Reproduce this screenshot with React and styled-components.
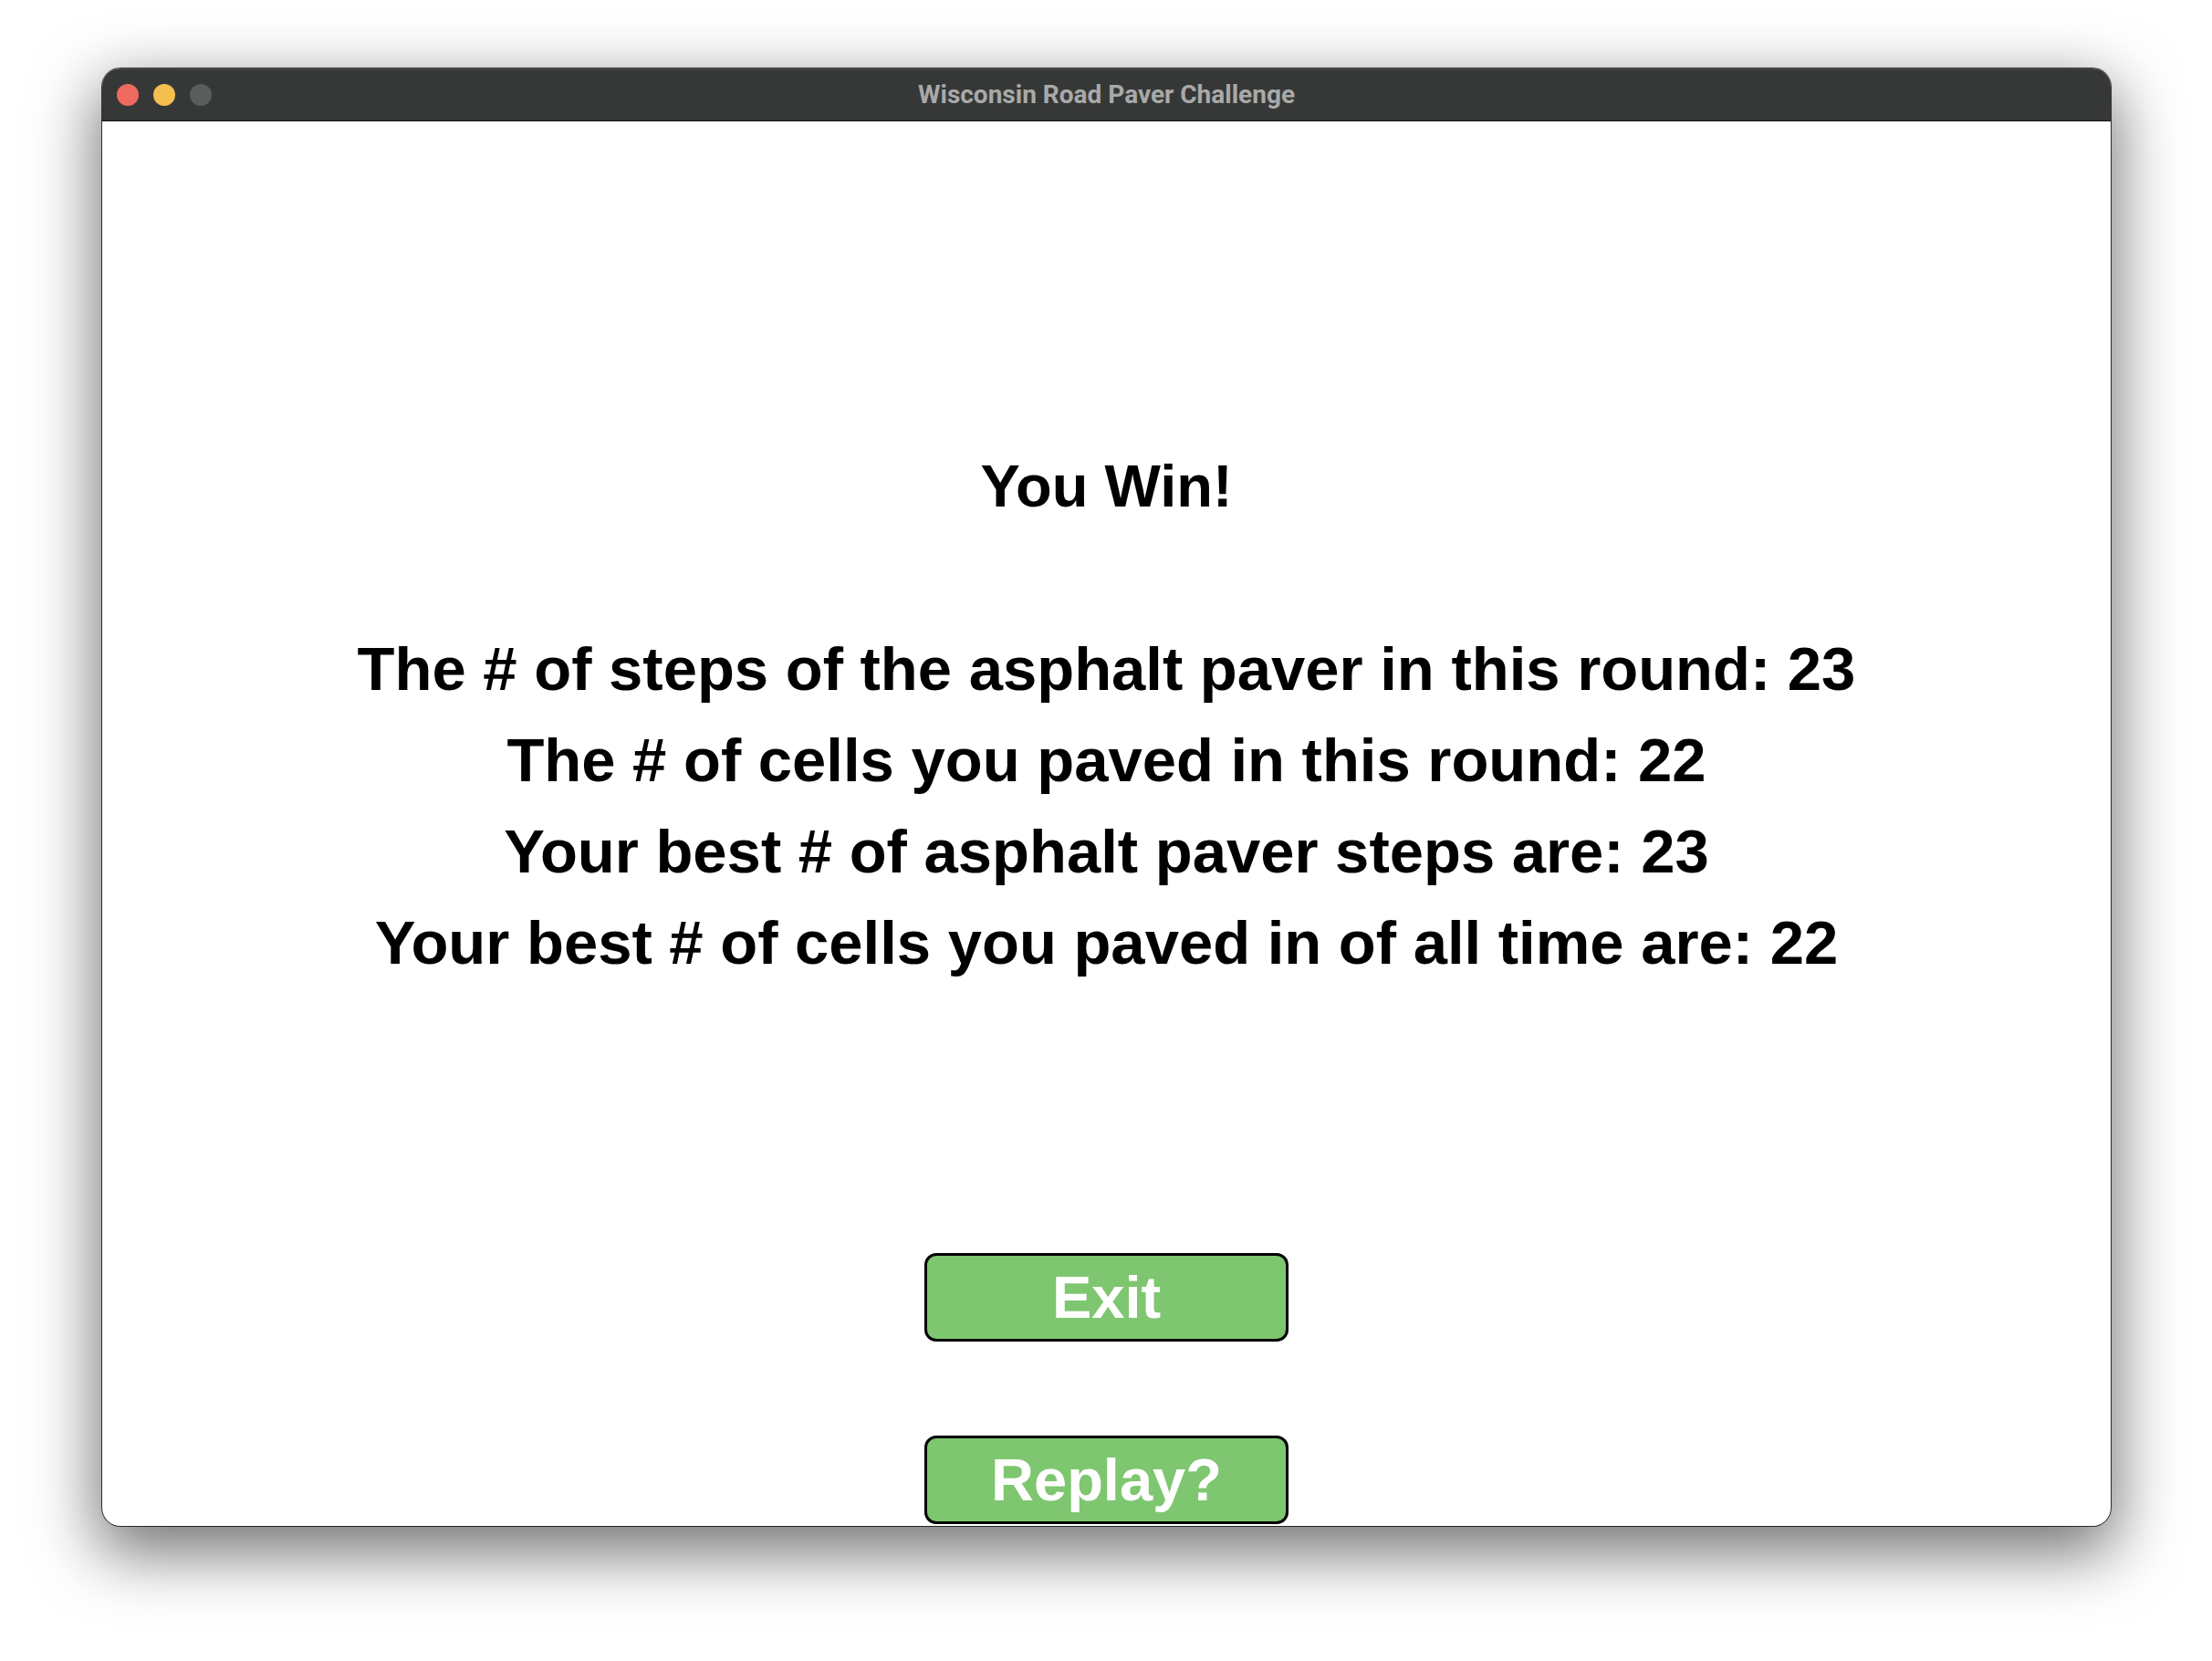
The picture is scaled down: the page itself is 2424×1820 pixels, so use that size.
import React from "react";
import styled, { createGlobalStyle } from "styled-components";

const GlobalStyle = createGlobalStyle`
  html, body {
    margin: 0;
    padding: 0;
    background: #ffffff;
  }
  body {
    font-family: "Liberation Sans", Arial, sans-serif;
  }
`;

const stats = [
    "The # of steps of the asphalt paver in this round: 23",
    "The # of cells you paved in this round: 22",
    "Your best # of asphalt paver steps are: 23",
    "Your best # of cells you paved in of all time are: 22",
];

const App = () => {
    return (
        <>
            <GlobalStyle />
            <Desktop>
                <Window>
                    <TitleBar>
                        <Lights>
                            <Light color="#ee6a5f" />
                            <Light color="#f5bf4f" />
                            <Light color="#5a5d5c" />
                        </Lights>
                        <Title>Wisconsin Road Paver Challenge</Title>
                        <span />
                    </TitleBar>
                    <Content>
                        <Heading>You Win!</Heading>
                        <Stats>
                            {stats.map((line) => (
                                <StatLine key={line}>{line}</StatLine>
                            ))}
                        </Stats>
                        <Buttons>
                            <GameButton>Exit</GameButton>
                            <GameButton>Replay?</GameButton>
                        </Buttons>
                    </Content>
                </Window>
            </Desktop>
        </>
    );
};

export default App;

const Desktop = styled.div`
    width: 2424px;
    height: 1820px;
    padding: 75px 111px 0 112px;
    box-sizing: border-box;
    overflow: hidden;
`;

const Window = styled.div`
    width: 2201px;
    height: 1597px;
    border-radius: 20px;
    overflow: hidden;
    background: #ffffff;
    display: flex;
    flex-direction: column;
    box-shadow:
        0 0 0 1px rgba(0, 0, 0, 0.75),
        0 24px 70px 6px rgba(0, 0, 0, 0.55);
`;

const TitleBar = styled.div`
    height: 57px;
    flex: none;
    background: #363837;
    border-bottom: 1px solid #111211;
    box-shadow: inset 0 1px 0 rgba(255, 255, 255, 0.12);
    display: grid;
    grid-template-columns: 1fr auto 1fr;
    align-items: center;
`;

const Lights = styled.div`
    display: flex;
    gap: 16px;
    padding-left: 16px;
`;

const Light = styled.span`
    width: 24px;
    height: 24px;
    border-radius: 50%;
    background: ${(p) => p.color};
`;

const Title = styled.div`
    font-family: Roboto, "Liberation Sans", sans-serif;
    font-weight: 700;
    font-size: 28px;
    color: #a9a9a9;
    white-space: nowrap;
`;

const Content = styled.div`
    flex: 1;
    overflow: hidden;
    display: flex;
    flex-direction: column;
    align-items: center;
    padding-top: 367px;
    color: #000000;
    font-weight: 700;
`;

const Heading = styled.h1`
    margin: 0;
    font-size: 65px;
    line-height: 65px;
    font-weight: 700;
`;

const Stats = styled.div`
    margin-top: 118px;
    display: flex;
    flex-direction: column;
    align-items: center;
`;

const StatLine = styled.p`
    margin: 0;
    font-size: 67px;
    line-height: 100px;
    white-space: nowrap;
`;

const Buttons = styled.div`
    margin-top: 290px;
    display: flex;
    flex-direction: column;
    align-items: center;
    gap: 103px;
`;

const GameButton = styled.button`
    width: 399px;
    height: 97px;
    flex: none;
    box-sizing: border-box;
    border: 3px solid #000000;
    border-radius: 13px;
    background: #7ec66f;
    color: #ffffff;
    font-family: "Liberation Sans", Arial, sans-serif;
    font-weight: 700;
    font-size: 65px;
    line-height: 1;
    padding: 0;
    display: flex;
    align-items: center;
    justify-content: center;
    cursor: pointer;
`;
